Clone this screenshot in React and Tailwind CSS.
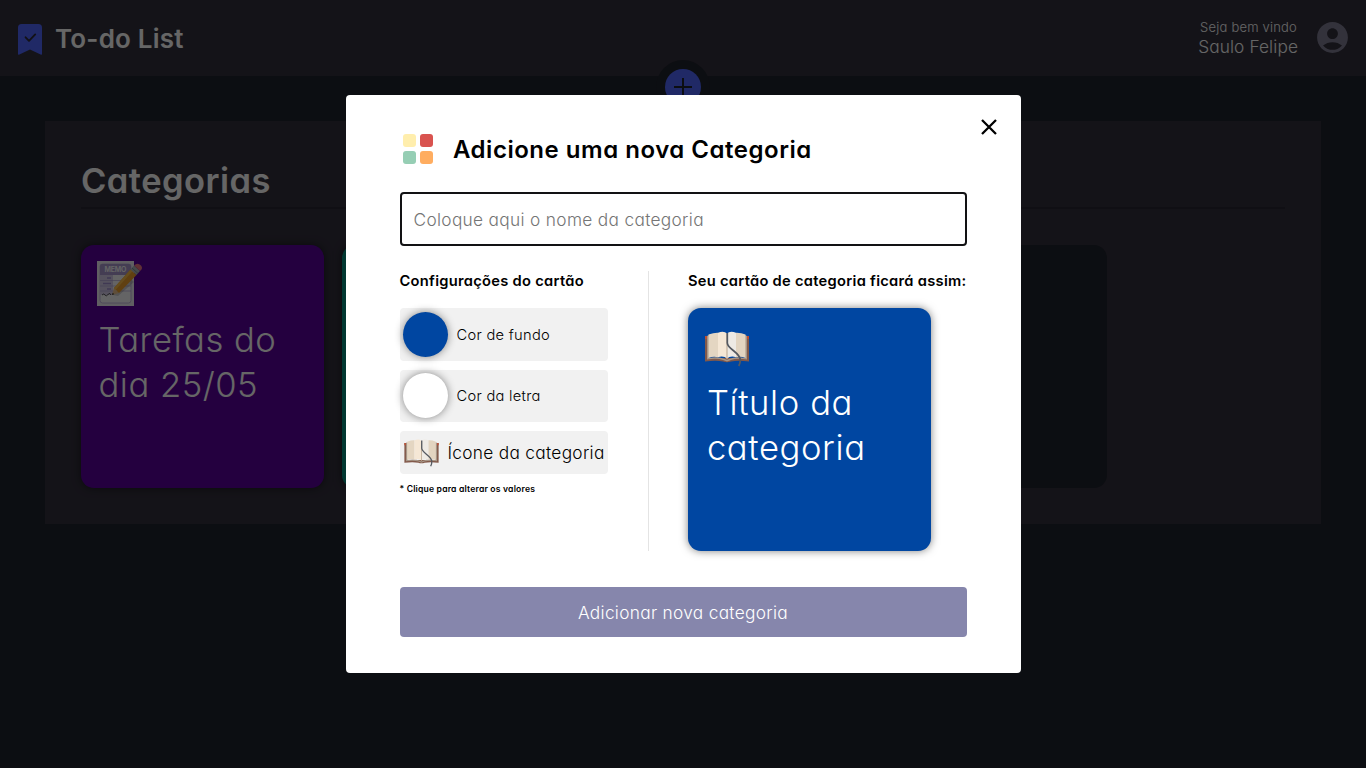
function BookmarkIcon() {
  return (
    <svg className="h-[31px] w-6 shrink-0" viewBox="0 0 24 31">
      <path d="M3.6 0h16.8Q24 0 24 3.6v26.2q0 1.500-1.400.8L12 25.600 1.400 30.600Q0 31.300 0 29.800V3.600Q0 0 3.600 0z" fill="#5067ff" />
      <path d="M7.600 13.300l3.400 3.500 6.200-6.400" fill="none" stroke="#2e2b38" strokeWidth="1.900" strokeLinecap="round" strokeLinejoin="round" />
    </svg>
  );
}

function AccountIcon() {
  return (
    <svg className="mb-px size-[37px] shrink-0" viewBox="0 0 24 24" fill="#7f7d93">
      <path d="M12 2C6.480 2 2 6.480 2 12s4.480 10 10 10 10-4.480 10-10S17.520 2 12 2zm0 4c1.930 0 3.500 1.570 3.500 3.500S13.930 13 12 13s-3.500-1.570-3.500-3.500S10.070 6 12 6zm0 14c-2.030 0-4.430-.82-6.140-2.880C7.550 15.800 9.680 15 12 15s4.450.8 6.140 2.120C16.430 19.180 14.030 20 12 20z" />
    </svg>
  );
}

function MemoIcon() {
  return (
    <svg className="size-[47px] shrink-0" viewBox="0 0 47 47">
      <rect x="1" y="1" width="37" height="45" fill="#f1eef6" />
      <rect x="4" y="4" width="31" height="39" rx="2.500" fill="#fbfafd" stroke="#c4b8e0" strokeWidth="1" />
      <path d="M6 4h27q2 0 2 2v9H4V6q0-2 2-2z" fill="#ab9ad0" />
      <text x="8.500" y="12" fontSize="7" fontWeight="600" fill="#fff" fontFamily="Inter, sans-serif" letterSpacing="-.2">MEMO</text>
      <path d="M4 15h13v20H4z" fill="#d6cdec" />
      <path d="M4 20.500h31M4 26h31M4 31h31" stroke="#a99bd0" strokeWidth=".6" />
      <path d="M11 18h4M7 23.500h8M11 29h4" stroke="#a08fd0" strokeWidth="1.500" />
      <path d="M6 35q2-2 3 0t3-.5 3 .5" fill="none" stroke="#444" strokeWidth=".9" />
      <path d="M17 35l18-16 3 3-16 14z" fill="#555" opacity=".25" />
      <path d="M16 35l2-7 5 5z" fill="#edc391" />
      <path d="M16 35l.7-2.300 1.600 1.600z" fill="#333" />
      <path d="M18 28L34.500 9.500l6 5.500L23 33z" fill="#f0a02c" />
      <path d="M18 28L34.500 9.500l2 1.800L19.700 29.700z" fill="#ffc04a" />
      <path d="M34.500 9.500l3.500-4 6 5.600-3.500 3.900z" fill="#aeb9bd" />
      <path d="M36 8l6 5.500" stroke="#7c8c90" strokeWidth="1" />
      <path d="M38 5.500q3.500-3.500 7 0 2.500 3-1 5.600z" fill="#ef7b86" />
    </svg>
  );
}

function BookIcon({ className }) {
  return (
    <svg className={className} viewBox="0 0 44 36">
      <path d="M0 5h4v22h36V5h4v25.500q-11-1.500-18 0-4 1.500-8 0-7-1.500-18 0z" fill="#82594a" />
      <path d="M0 5h3v3H0zM41 5h3v3h-3z" fill="#b94e35" />
      <path d="M2 5l2-1v23q9-2 16 1l2 .8 2-.8q7-3 16-1V4l2 1v23.500q-10-1.500-16 .5l-4 1.500-4-1.500q-6-2-16-.5z" fill="#a69687" />
      <path d="M3.500 3.500Q9 1.500 13 1.700v24.500Q8 25 3.500 27z" fill="#e4d6c2" />
      <path d="M13 1.700Q19-.5 22 2.500v25.300q-3-3.300-9-1.600z" fill="#f5e7d5" />
      <path d="M31 1.700Q25-.5 22 2.500v25.300q3-3.300 9-1.600z" fill="#eeeae4" />
      <path d="M31 1.700q5-.2 9.500 1.800V27Q36 25 31 26.200z" fill="#e2d4c0" />
      <path d="M22 2.500v25.300" stroke="#b9a58e" strokeWidth="1" />
      <path d="M22.300 2v10c0 6 13 9.500 13 17q0 3-1.500 6" fill="none" stroke="#555960" strokeWidth="1.700" />
    </svg>
  );
}

function CategoriesIcon() {
  return (
    <svg className="size-9 shrink-0" viewBox="0 0 36 36">
      <rect x="3" y="3" width="13" height="13" rx="3" fill="#ffeead" />
      <rect x="20" y="3" width="13" height="13" rx="3" fill="#d9534f" />
      <rect x="3" y="20" width="13" height="13" rx="3" fill="#96ceb4" />
      <rect x="20" y="20" width="13" height="13" rx="3" fill="#ffad60" />
    </svg>
  );
}

function Header() {
  return (
    <header className="flex h-[76px] items-center justify-between bg-[#33303d] px-[18px] text-white">
      <div className="flex items-center gap-[13px]">
        <div className="pt-[3px]"><BookmarkIcon /></div>
        <h1 className="pt-0.5 text-[26px] leading-8 font-semibold tracking-[0.2px]">To-do List</h1>
      </div>
      <div className="-mr-[3px] flex items-center gap-4">
        <div className="flex flex-col items-end">
          <span className="mr-px text-[13px] leading-[18px] font-light tracking-[0.2px]">Seja bem vindo</span>
          <span className="text-[17.300px] leading-[22px] font-light tracking-[0.1px]">Saulo Felipe</span>
        </div>
        <AccountIcon />
      </div>
    </header>
  );
}

function Board() {
  return (
    <main className="relative flex-1 px-[45px] pt-[45px]">
      <button className="absolute top-[-16px] left-[656px] flex size-[54px] items-center justify-center rounded-full bg-[#20232d]">
        <span className="flex size-9 items-center justify-center rounded-full bg-[#5067ff]">
          <svg className="size-[18px]" viewBox="0 0 18 18"><path d="M9 0v18M0 9h18" stroke="#20232d" strokeWidth="2" /></svg>
        </span>
      </button>
      <section className="h-[403px] w-[1276px] bg-[#33303d] px-9 pt-9">
        <h2 className="h-[52px] border-b-2 border-[#292732] pt-px text-[34.500px] leading-[46px] font-semibold tracking-[0.45px] text-white">Categorias</h2>
        <div className="mt-9 flex gap-[18px]">
          <article className="flex size-[243px] flex-col rounded-[13px] bg-[#5a009e] pt-[15px] pl-[15px] text-white shadow-[0_0_9px_rgba(0,0,0,.5)]">
            <MemoIcon />
            <p className="mt-[10px] ml-[2.500px] text-[34.600px] leading-[45px] font-light tracking-[0.5px]">Tarefas do<br />dia 25/05</p>
          </article>
          <article className="size-[243px] rounded-[13px] bg-[#038a7c] shadow-[0_0_9px_rgba(0,0,0,.5)]" />
          <article className="size-[243px] rounded-[13px] bg-[#20232d]" />
          <article className="size-[243px] rounded-[13px] bg-[#20232d]" />
        </div>
      </section>
    </main>
  );
}

function ColorOption({ swatch, label }) {
  return (
    <button className="flex h-[52.500px] items-center gap-[9px] rounded-[4px] bg-[#f1f1f1] px-[3px] text-left">
      <span className={`size-[45px] rounded-full shadow-[0_0_9px_rgba(0,0,0,.45)] ${swatch}`} />
      <span className="pt-px text-[14.700px] leading-5 font-light tracking-[0.28px]">{label}</span>
    </button>
  );
}

function CategoryModal() {
  return (
    <div className="relative h-[578px] w-[675px] rounded-[4px] bg-white px-[54px] pt-9 text-black">
      <button className="absolute top-[23.500px] right-[23.500px]">
        <svg className="size-4" viewBox="0 0 16 16"><path d="M1 1l14 14M15 1L1 15" stroke="#000" strokeWidth="2.300" /></svg>
      </button>
      <div className="flex h-9 items-center gap-[17.500px]">
        <CategoriesIcon />
        <h2 className="pt-0.5 text-[24px] leading-8 font-semibold tracking-[0.52px]">Adicione uma nova Categoria</h2>
      </div>
      <input
        className="mt-[25px] block h-[54px] w-full rounded-[4px] border-2 border-[#121214] px-3 text-[17.300px] font-light tracking-[0.32px] outline-none placeholder:text-[#757575] placeholder:opacity-100"
        placeholder="Coloque aqui o nome da categoria"
      />
      <div className="mt-[25px] flex h-[280px]">
        <div className="flex w-[208.500px] flex-col">
          <h3 className="text-[14.700px] leading-5 font-semibold tracking-[0.28px] whitespace-nowrap">Configurações do cartão</h3>
          <div className="mt-[17px] flex flex-col gap-[9px]">
            <ColorOption swatch="bg-[#0046a1]" label="Cor de fundo" />
            <ColorOption swatch="bg-white" label="Cor da letra" />
            <button className="flex h-[43px] items-center gap-[9px] rounded-[4px] bg-[#f1f1f1] pl-1 text-left">
              <BookIcon className="h-[28px] w-[35px] shrink-0" />
              <span className="text-[17.300px] leading-6 font-light tracking-[0.3px] whitespace-nowrap">Ícone da categoria</span>
            </button>
          </div>
          <small className="mt-[9px] text-[8.600px] leading-3 font-semibold tracking-[0.18px] whitespace-nowrap">* Clique para alterar os valores</small>
        </div>
        <div className="mr-[39px] ml-10 w-px bg-[#e4e4e4]" />
        <div className="flex flex-1 flex-col">
          <h3 className="text-[14.700px] leading-5 font-semibold tracking-[0.28px] whitespace-nowrap">Seu cartão de categoria ficará assim:</h3>
          <article className="mt-[17px] size-[243px] rounded-[13px] bg-[#0046a1] pt-[23px] pl-[17px] text-white shadow-[0_0_9px_rgba(0,0,0,.5)]">
            <BookIcon className="h-9 w-11" />
            <p className="mt-[13px] ml-0.5 text-[34.600px] leading-[45px] font-light tracking-[0.6px]">Título da<br />categoria</p>
          </article>
        </div>
      </div>
      <button className="mt-9 flex h-[50px] w-full items-center justify-center rounded-[4px] bg-[#8686ac] pt-0.5 text-[17.300px] font-light tracking-[0.3px] text-white">
        Adicionar nova categoria
      </button>
    </div>
  );
}

export default function App() {
  return (
    <div className="relative flex h-[768px] w-[1366px] flex-col overflow-hidden bg-[#20232d] font-['Inter',sans-serif] [font-feature-settings:'cv11','ss03']">
      <Header />
      <Board />
      <div className="absolute inset-0 flex items-center justify-center bg-black/60">
        <CategoryModal />
      </div>
    </div>
  );
}
